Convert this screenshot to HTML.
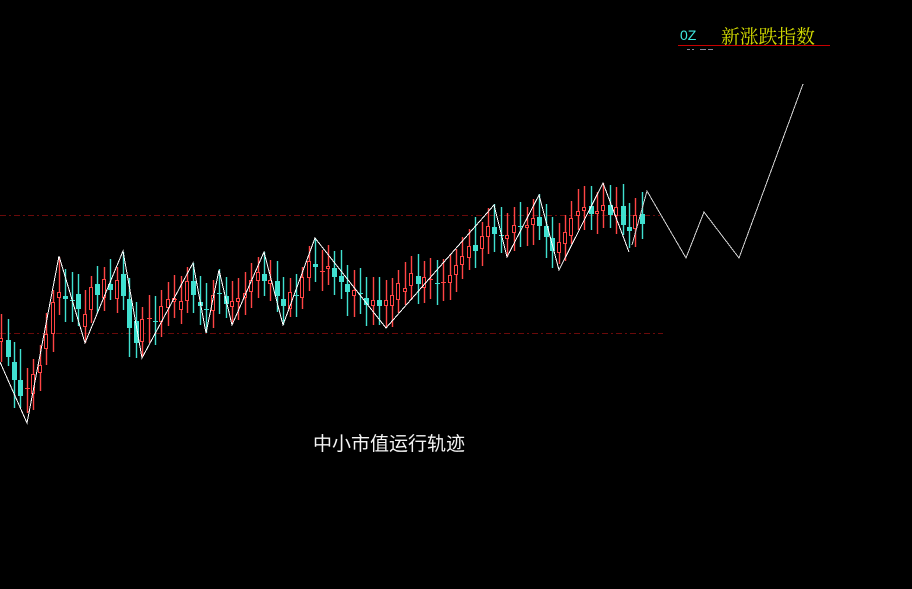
<!DOCTYPE html>
<html lang="zh">
<head>
<meta charset="utf-8">
<title>中小市值运行轨迹</title>
<style>
html,body{margin:0;padding:0;background:#000;width:912px;height:589px;overflow:hidden}
svg{position:absolute;left:0;top:0}
.t{position:absolute;white-space:nowrap;line-height:1}
</style>
</head>
<body>
<svg width="912" height="589" viewBox="0 0 912 589" xmlns="http://www.w3.org/2000/svg">
<path shape-rendering="crispEdges" d="M0 215.5H660M0 333.5H663" stroke="#6a0a0a" stroke-width="1" stroke-dasharray="6 3 2 3" fill="none"/>
<path fill="none" stroke="#ff4444" stroke-width="1.4" d="M1.5 314V362M27.5 368V413M33.5 359V410M40.5 345V391M46.5 313V365M53.5 290V352M59.5 257V315M85.5 290V343M91.5 276V323M104.5 267V311M117.5 267V313M142.5 307V357M149.5 295V343M161.5 290V337M168.5 282V326M174.5 275V318M181.5 276V324M187.5 267V313M213.5 280V328M232.5 281V324M238.5 278V320M245.5 272V315M251.5 263V308M258.5 257V298M270.5 260V301M290.5 278V317M302.5 267V309M309.5 246V291M322.5 250V291M328.5 245V285M354.5 270V317M373.5 277V325M386.5 280V328M392.5 278V327M398.5 270V313M405.5 262V305M411.5 256V300M424.5 261V303M430.5 258V299M443.5 259V301M450.5 254V300M456.5 249V292M462.5 237V279M469.5 229V270M482.5 222V266M488.5 208V254M507.5 213V257M514.5 207V251M527.5 207V246M533.5 199V245M559.5 223V264M565.5 215V261M571.5 201V244M578.5 189V230M584.5 186V230M597.5 192V234M603.5 183V228M616.5 187V234M635.5 198V247"/>
<path fill="none" stroke="#40e0d0" stroke-width="1.4" d="M8.5 319V366M14.5 342V408M20.5 349V408M65.5 269V322M72.5 272V322M78.5 274V326M97.5 266V313M110.5 259V300M123.5 252V310M129.5 278V357M136.5 302V358M155.5 296V345M193.5 263V313M200.5 276V325M206.5 283V333M219.5 269V314M226.5 277V318M264.5 252V296M277.5 261V312M283.5 277V325M296.5 274V317M315.5 238V282M334.5 251V295M341.5 250V299M347.5 265V316M360.5 268V314M366.5 277V326M379.5 277V325M418.5 254V304M437.5 260V305M475.5 217V268M494.5 204V252M501.5 207V253M520.5 202V247M539.5 194V240M546.5 204V258M552.5 217V268M591.5 186V230M610.5 185V228M623.5 184V235M629.5 203V248M642.5 192V239"/>
<g shape-rendering="crispEdges">
<path fill="#40e0d0" d="M6 340h5v17h-5zM12 362h5v18h-5zM18 380h5v16h-5zM63 296h5v3h-5zM76 294h5v15h-5zM95 284h5v11h-5zM108 284h5v6h-5zM121 274h5v22h-5zM127 299h5v29h-5zM134 321h5v22h-5zM191 281h5v14h-5zM198 302h5v4h-5zM224 296h5v8h-5zM262 274h5v7h-5zM275 281h5v15h-5zM281 299h5v7h-5zM313 264h5v3h-5zM332 268h5v9h-5zM339 276h5v6h-5zM345 284h5v8h-5zM364 298h5v7h-5zM377 300h5v6h-5zM416 276h5v8h-5zM473 245h5v6h-5zM492 227h5v7h-5zM537 217h5v9h-5zM544 226h5v11h-5zM550 238h5v13h-5zM589 206h5v8h-5zM608 205h5v10h-5zM621 206h5v19h-5zM627 227h5v4h-5zM640 214h5v10h-5z"/>
<path fill="none" stroke="#40e0d0" stroke-width="1" d="M70 300.5h5M153 321.5h5M204 309.5h5M217 293.5h5M294 295.5h5M358 293.5h5M435 283.5h5M499 235.5h5M518 226.5h5"/>
<path fill="#000" stroke="#ff4444" stroke-width="1" d="M-.5 338.5h3v3h-3zM31.5 374.5h3v19h-3zM38.5 365.5h3v7h-3zM44.5 334.5h3v14h-3zM51.5 302.5h3v31h-3zM57.5 292.5h3v5h-3zM83.5 314.5h3v12h-3zM89.5 287.5h3v22h-3zM102.5 279.5h3v18h-3zM115.5 280.5h3v18h-3zM140.5 319.5h3v22h-3zM159.5 306.5h3v15h-3zM166.5 299.5h3v8h-3zM172.5 298.5h3v3h-3zM179.5 301.5h3v8h-3zM185.5 281.5h3v19h-3zM211.5 295.5h3v15h-3zM230.5 301.5h3v5h-3zM236.5 298.5h3v3h-3zM243.5 293.5h3v4h-3zM249.5 280.5h3v11h-3zM256.5 272.5h3v8h-3zM268.5 280.5h3v3h-3zM288.5 292.5h3v16h-3zM300.5 277.5h3v20h-3zM307.5 261.5h3v16h-3zM326.5 266.5h3v2h-3zM352.5 290.5h3v5h-3zM371.5 300.5h3v5h-3zM384.5 300.5h3v5h-3zM390.5 295.5h3v10h-3zM396.5 283.5h3v16h-3zM403.5 288.5h3v3h-3zM409.5 273.5h3v12h-3zM422.5 277.5h3v10h-3zM448.5 275.5h3v7h-3zM454.5 265.5h3v9h-3zM460.5 256.5h3v8h-3zM467.5 246.5h3v11h-3zM480.5 236.5h3v12h-3zM486.5 226.5h3v10h-3zM505.5 235.5h3v3h-3zM512.5 225.5h3v7h-3zM525.5 225.5h3v2h-3zM531.5 218.5h3v6h-3zM557.5 242.5h3v10h-3zM563.5 232.5h3v11h-3zM569.5 218.5h3v17h-3zM576.5 211.5h3v4h-3zM582.5 207.5h3v3h-3zM595.5 211.5h3v2h-3zM601.5 205.5h3v5h-3zM614.5 207.5h3v8h-3zM633.5 215.5h3v13h-3z"/>
<path fill="none" stroke="#ff4444" stroke-width="1" d="M25 388.5h5M147 318.5h5M172 299.5h5M320 271.5h5M428 279.5h5M441 282.5h5"/>
<path fill="none" stroke="#ffffff" stroke-width="1" d="M0 362L27 423L59 256L85 343L123 251L142 358L193 263L206 333L219 270L232 325L264 252L283 325L315 238L386 328L494 205L507 257L539 195L559 270L603 183L629 252"/>
<path fill="none" stroke="#d2d2d2" stroke-width="1" d="M632 245L647 191L686 258L704 212L739 258L803 84"/>
<path d="M678 45.5H830" stroke="#c80000" stroke-width="1" fill="none"/>
<path d="M687 49.5h3M692 49.5h2M700 49.5h6M708 49.5h5" stroke="#8a8a9a" stroke-width="1" fill="none"/>
</g>
</svg>
<div class="t" style="left:680px;top:28px;font:14px/1 'Liberation Sans',sans-serif;color:#40e8e0">0Z</div>
<div class="t" style="left:721px;top:27px;font-family:'Noto Serif CJK SC','Liberation Serif',serif;font-size:18.8px;color:#d4dc00">新涨跌指数</div>
<div class="t" style="left:313px;top:435px;font-family:'Liberation Sans','Noto Sans CJK SC',sans-serif;font-size:19px;color:#f4f4f4">中小市值运行轨迹</div>
</body>
</html>
